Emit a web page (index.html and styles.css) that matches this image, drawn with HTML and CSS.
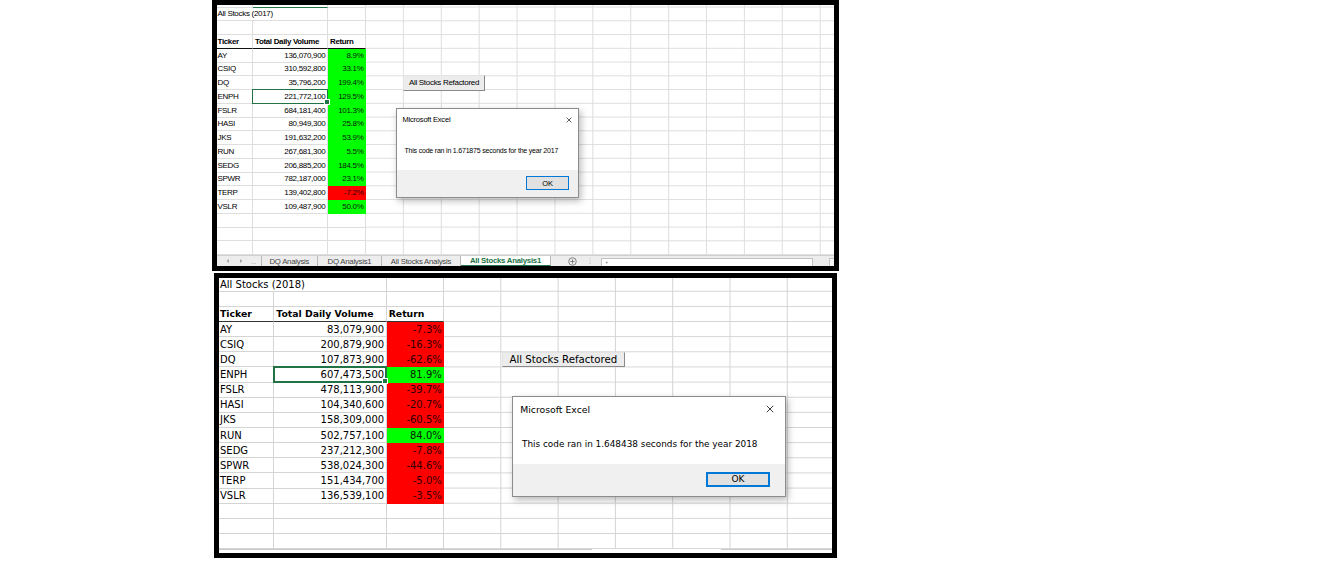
FILE: index.html
```html
<!DOCTYPE html>
<html lang="en">
<head>
<meta charset="utf-8">
<title>All Stocks – Excel</title>
<link rel="stylesheet" href="styles.css">
</head>
<body>
<main class="page">

  <section class="shot shot-2017">
    <div class="sheet">
      <div class="table t17">
        <div class="c strip"></div><div class="c strip sel"></div><div class="c strip"></div>

        <div class="c first span2">All Stocks (2017)</div><div class="c"></div>
        <div class="c"></div><div class="c"></div><div class="c"></div>
        <div class="c first hd">Ticker</div><div class="c hd">Total Daily Volume</div><div class="c hd">Return</div>

        <div class="c first">AY</div><div class="c num">136,070,900</div><div class="c num pos">8.9%</div>
        <div class="c first">CSIQ</div><div class="c num">310,592,800</div><div class="c num pos">33.1%</div>
        <div class="c first">DQ</div><div class="c num">35,796,200</div><div class="c num pos">199.4%</div>
        <div class="c first">ENPH</div><div class="c num active">221,772,100</div><div class="c num pos">129.5%</div>
        <div class="c first">FSLR</div><div class="c num">684,181,400</div><div class="c num pos">101.3%</div>
        <div class="c first">HASI</div><div class="c num">80,949,300</div><div class="c num pos">25.8%</div>
        <div class="c first">JKS</div><div class="c num">191,632,200</div><div class="c num pos">53.9%</div>
        <div class="c first">RUN</div><div class="c num">267,681,300</div><div class="c num pos">5.5%</div>
        <div class="c first">SEDG</div><div class="c num">206,885,200</div><div class="c num pos">184.5%</div>
        <div class="c first">SPWR</div><div class="c num">782,187,000</div><div class="c num pos">23.1%</div>
        <div class="c first">TERP</div><div class="c num">139,402,800</div><div class="c num neg">-7.2%</div>
        <div class="c first">VSLR</div><div class="c num">109,487,900</div><div class="c num pos">50.0%</div>

        <div class="c"></div><div class="c"></div><div class="c"></div>
        <div class="c"></div><div class="c"></div><div class="c"></div>
        <div class="c"></div><div class="c"></div><div class="c"></div>
      </div>
      <div class="rest r17"></div>

      <button class="macro macro-17" type="button">All Stocks Refactored</button>

      <div class="msgbox mb-17">
        <div class="mb-title"><span>Microsoft Excel</span><svg class="mb-x" viewBox="0 0 10 10"><path d="M1 1L9 9M9 1L1 9"/></svg></div>
        <div class="mb-body">This code ran in 1.671875 seconds for the year 2017</div>
        <div class="mb-foot"><span class="mb-ok">OK</span></div>
      </div>
    </div>

    <div class="tabbar">
      <div class="tb-nav">
        <svg class="tb-tri" viewBox="0 0 6 6"><path d="M4 1L1.5 3L4 5Z"/></svg>
        <svg class="tb-tri" viewBox="0 0 6 6"><path d="M2 1L4.5 3L2 5Z"/></svg>
        <span class="tb-more">...</span>
      </div>
      <div class="tab tab-1">DQ Analysis</div>
      <div class="tab tab-2">DQ Analysis1</div>
      <div class="tab tab-3">All Stocks Analysis</div>
      <div class="tab tab-on">All Stocks Analysis1</div>
      <svg class="tb-add" viewBox="0 0 10 10"><circle cx="5" cy="5" r="4.2"/><path d="M5 2.6V7.4M2.6 5H7.4"/></svg>
      <span class="tb-dots">&#8942;</span>
      <div class="tb-scroll"><svg class="tb-sarrow" viewBox="0 0 6 6"><path d="M4 1.5L2 3L4 4.5Z"/></svg></div>
      <div class="tb-end"></div>
    </div>
  </section>

  <section class="shot shot-2018">
    <div class="sheet">
      <div class="table t18">
        <div class="c first span2">All Stocks (2018)</div><div class="c"></div>
        <div class="c"></div><div class="c"></div><div class="c"></div>
        <div class="c first hd">Ticker</div><div class="c hd">Total Daily Volume</div><div class="c hd">Return</div>

        <div class="c first">AY</div><div class="c num">83,079,900</div><div class="c num neg">-7.3%</div>
        <div class="c first">CSIQ</div><div class="c num">200,879,900</div><div class="c num neg">-16.3%</div>
        <div class="c first">DQ</div><div class="c num">107,873,900</div><div class="c num neg">-62.6%</div>
        <div class="c first">ENPH</div><div class="c num active">607,473,500</div><div class="c num pos">81.9%</div>
        <div class="c first">FSLR</div><div class="c num">478,113,900</div><div class="c num neg">-39.7%</div>
        <div class="c first">HASI</div><div class="c num">104,340,600</div><div class="c num neg">-20.7%</div>
        <div class="c first">JKS</div><div class="c num">158,309,000</div><div class="c num neg">-60.5%</div>
        <div class="c first">RUN</div><div class="c num">502,757,100</div><div class="c num pos">84.0%</div>
        <div class="c first">SEDG</div><div class="c num">237,212,300</div><div class="c num neg">-7.8%</div>
        <div class="c first">SPWR</div><div class="c num">538,024,300</div><div class="c num neg">-44.6%</div>
        <div class="c first">TERP</div><div class="c num">151,434,700</div><div class="c num neg">-5.0%</div>
        <div class="c first">VSLR</div><div class="c num">136,539,100</div><div class="c num neg">-3.5%</div>

        <div class="c"></div><div class="c"></div><div class="c"></div>
        <div class="c"></div><div class="c"></div><div class="c"></div>
        <div class="c"></div><div class="c"></div><div class="c"></div>
      </div>
      <div class="rest r18"></div>

      <button class="macro macro-18" type="button">All Stocks Refactored</button>

      <div class="msgbox mb-18">
        <div class="mb-title"><span>Microsoft Excel</span><svg class="mb-x" viewBox="0 0 10 10"><path d="M1 1L9 9M9 1L1 9"/></svg></div>
        <div class="mb-body">This code ran in 1.648438 seconds for the year 2018</div>
        <div class="mb-foot"><span class="mb-ok">OK</span></div>
      </div>
    </div>
    <div class="sheet-foot"></div>
  </section>

</main>
</body>
</html>
```

FILE: styles.css
```css
* { box-sizing: border-box; margin: 0; padding: 0; }

html, body { background: #fff; }
body { width: 1332px; height: 562px; overflow: hidden; }

.page {
  display: flex;
  flex-direction: column;
  align-items: flex-start;
  padding-left: 212px;
}

/* ---------- screenshot frames ---------- */
.shot {
  border: 5px solid #000;
  background: #fff;
  overflow: hidden;
  display: flex;
  flex-direction: column;
  color: #000;
}
.shot-2017 {
  width: 627px;
  height: 271px;
  font-family: "Liberation Sans", Arial, sans-serif;
  letter-spacing: -0.3px;
  --g: #dedede;
}
.shot-2018 {
  width: 623px;
  height: 285px;
  margin-top: 2px;
  margin-left: 2px;
  font-family: "DejaVu Sans", Verdana, sans-serif;
  --g: #d4d4d4;
}

.sheet {
  position: relative;
  display: flex;
  flex: none;
}
.shot-2017 .sheet { height: 250.05px; }
.shot-2018 .sheet { height: 271.25px; }

/* ---------- cell grid ---------- */
.table { display: grid; flex: none; }
.t17 {
  grid-template-columns: 36px 75px 38px;
  grid-template-rows: 2.55px repeat(18, 13.75px);
  font-size: 8px;
}
.t18 {
  grid-template-columns: 55.3px 112.4px 57.6px;
  grid-template-rows: 13.7px repeat(17, 15.15px);
  font-size: 10px;
}

.c {
  border-right: 1px solid var(--g);
  border-bottom: 1px solid var(--g);
  display: flex;
  align-items: center;
  padding: 0 1px 0 2px;
  white-space: nowrap;
  min-width: 0;
}
.t17 .first { padding-left: 0.5px; }
.t18 .first { padding-left: 1px; }
.span2 { grid-column: span 2; }

.strip { padding: 0; }
.strip.sel { border-bottom-color: #217346; }

.hd { font-weight: bold; border-bottom-color: #111; }
.t17 .hd { font-size: 7.9px; }
.t18 .hd { font-size: 9.3px; border-bottom-width: 1.5px; border-bottom-color: #333; }

.num { justify-content: flex-end; }
.t17 .num { padding-right: 1.5px; }
.t18 .num { padding-right: 1.5px; }

.pos { background: #00ff00; border-color: #00ff00; color: #082008; }
.neg { background: #ff0000; border-color: #ff0000; color: #300000; }

.active { position: relative; }
.active::after {
  content: "";
  position: absolute;
  left: -1px; top: -1px; right: -1px; bottom: -1px;
  border: 1.5px solid #217346;
}
.active::before {
  content: "";
  position: absolute;
  right: -2.5px; bottom: -2.5px;
  width: 4px; height: 4px;
  background: #217346;
  border: 1px solid #fff;
  z-index: 1;
}
.t18 .active::after { border-width: 2px; }

/* empty worksheet area to the right */
.rest { flex: 1; }
.r17 {
  background-image:
    linear-gradient(to left, var(--g) 1px, transparent 1px),
    linear-gradient(to top, var(--g) 1px, transparent 1px);
  background-size: 37.9px 13.75px;
  background-position: 0 2.55px;
}
.r18 {
  background-image:
    linear-gradient(to left, var(--g) 1px, transparent 1px),
    linear-gradient(to top, var(--g) 1px, transparent 1px);
  background-size: 57.3px 15.15px;
  background-position: 0 -1.45px;
}

/* ---------- macro button ---------- */
.macro {
  position: absolute;
  font-family: inherit;
  letter-spacing: inherit;
  color: #000;
  background: #ececec;
  border: 1px solid;
  border-color: #e4e4e4 #8a8a8a #8a8a8a #e4e4e4;
  display: flex;
  align-items: center;
  justify-content: center;
  white-space: nowrap;
}
.macro-17 { left: 186px; top: 70px; width: 82px; height: 15.7px; font-size: 8px; }
.macro-18 { left: 282.7px; top: 73.7px; width: 123.3px; height: 15.6px; font-size: 10.2px; }

/* ---------- message box ---------- */
.msgbox {
  position: absolute;
  background: #fff;
  border: 1px solid #8c8c8c;
  box-shadow: 2px 3px 7px rgba(0, 0, 0, 0.28);
  display: flex;
  flex-direction: column;
  z-index: 2;
}
.mb-title {
  display: flex;
  align-items: center;
  justify-content: space-between;
  flex: none;
}
.mb-x { fill: none; stroke: #222; }
.mb-body { display: flex; align-items: center; flex: none; white-space: nowrap; }
.mb-foot {
  flex: 1;
  background: #f0f0f0;
  display: flex;
  justify-content: flex-end;
  align-items: flex-start;
}
.mb-ok {
  display: flex;
  align-items: center;
  justify-content: center;
  background: #e1e1e1;
  border: 1px solid #0078d7;
}

.mb-17 { left: 179px; top: 102.7px; width: 183.3px; height: 90.6px; letter-spacing: -0.2px; }
.mb-17 .mb-title { height: 22px; padding: 0 6px 0 5.5px; font-size: 7.5px; }
.mb-17 .mb-x { width: 6px; height: 6px; stroke-width: 1.2; }
.mb-17 .mb-body { height: 39.3px; padding-left: 7.5px; font-size: 7px; }
.mb-17 .mb-foot { padding: 6.5px 9.3px 0 0; }
.mb-17 .mb-ok { width: 43px; height: 13.7px; font-size: 7.5px; }

.mb-18 { left: 292.7px; top: 118px; width: 274.3px; height: 100.7px; }
.mb-18 .mb-title { height: 24px; padding: 0 10.5px 0 7.5px; font-size: 9.3px; }
.mb-18 .mb-x { width: 8px; height: 8px; stroke-width: 1.1; }
.mb-18 .mb-body { height: 43.3px; padding: 2px 0 0 9.3px; font-size: 8.9px; }
.mb-18 .mb-foot { padding: 7.4px 15px 0 0; }
.mb-18 .mb-ok { width: 64px; height: 15.6px; font-size: 9px; border-width: 2px; }

/* ---------- sheet tab bar (2017) ---------- */
.tabbar {
  flex: 1;
  display: flex;
  align-items: stretch;
  background: #ededed;
  border-top: 1px solid #cfcfcf;
  font-size: 7.8px;
  letter-spacing: -0.25px;
  color: #444;
  white-space: nowrap;
}
.tb-nav {
  width: 44.7px;
  flex: none;
  display: flex;
  align-items: center;
  padding-left: 8px;
  gap: 7px;
  border-right: 1px solid #b9b9b9;
}
.tb-tri { width: 6px; height: 6px; fill: #a8a8a8; }
.tb-more { color: #9a9a9a; font-size: 7px; }
.tab {
  flex: none;
  display: flex;
  align-items: center;
  justify-content: center;
  border-right: 1px solid #b9b9b9;
}
.tab-1 { width: 56.3px; }
.tab-2 { width: 64px; }
.tab-3 { width: 79px; }
.tab-on {
  width: 90px;
  background: #fff;
  color: #217346;
  font-weight: bold;
  border-bottom: 1px solid #217346;
}
.tb-add {
  flex: none;
  width: 9px;
  height: 9px;
  align-self: center;
  margin-left: 17.5px;
  fill: none;
  stroke: #6b6b6b;
  stroke-width: 0.9;
}
.tb-dots {
  flex: none;
  width: 5px;
  margin-left: 10px;
  display: flex;
  align-items: center;
  justify-content: center;
  color: #9a9a9a;
  font-family: "DejaVu Sans", sans-serif;
  font-size: 7px;
}
.tb-scroll {
  flex: none;
  width: 212.3px;
  margin: 1.5px 0 0 8.2px;
  background: #fff;
  border: 1px solid #c3c3c3;
  border-bottom: none;
  display: flex;
  align-items: center;
  padding-left: 2px;
}
.tb-sarrow { width: 5px; height: 5px; fill: #777; }
.tb-end {
  flex: none;
  width: 8px;
  margin: 1.5px 0 0 16px;
  background: #f7f7f7;
  border: 1px solid #c3c3c3;
  border-bottom: none;
}

/* ---------- bottom strip (2018) ---------- */
.sheet-foot {
  flex: 1;
  background-image: linear-gradient(to right, #c8c8c8 0 373px, transparent 373px 502px, #c8c8c8 502px);
  background-size: 100% 1px;
  background-repeat: no-repeat;
}
```
